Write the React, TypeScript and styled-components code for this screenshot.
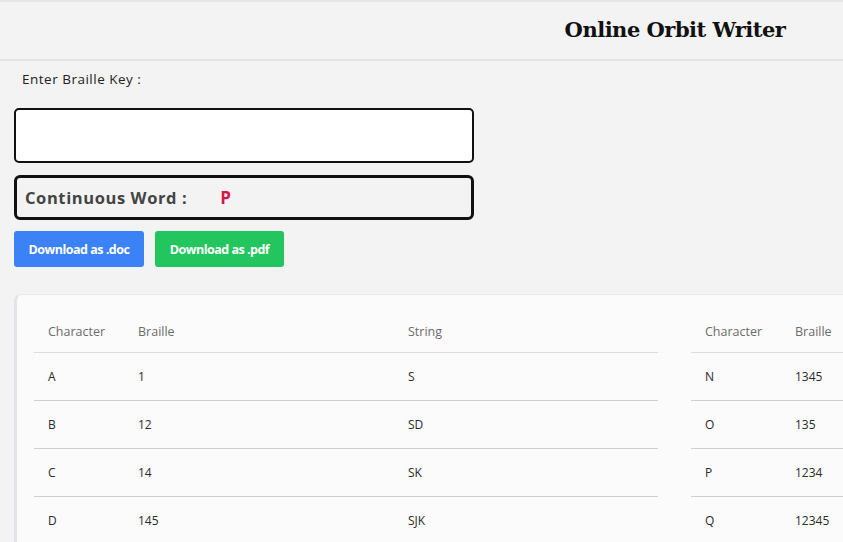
import React from "react";
import styled, { createGlobalStyle } from "styled-components";

const Global = createGlobalStyle`
  html, body { margin: 0; padding: 0; overflow: hidden; }
  body {
    background: #f3f3f3;
    font-family: "Open Sans", "Noto Sans", sans-serif;
    color: #222;
  }
`;

const Page = styled.div`
  width: 1350px;
  min-height: 542px;
`;

const Header = styled.header`
  border-top: 2px solid #e6e6e6;
  border-bottom: 2px solid #e3e3e5;
  height: 57px;
  display: flex;
  align-items: center;
  justify-content: center;
`;

const Title = styled.h1`
  margin: 0 0 2px;
  font-family: "DejaVu Serif", "Liberation Serif", serif;
  font-weight: 700;
  font-size: 21px;
  letter-spacing: -0.5px;
  color: #111;
`;

const Main = styled.main`
  padding: 0 14px;
`;

const Label = styled.div`
  font-size: 13.5px;
  letter-spacing: 0.5px;
  padding: 9px 8px 0;
  height: 29px;
  color: #222;
`;

const KeyInput = styled.div`
  margin-top: 9px;
  width: 460px;
  height: 55px;
  box-sizing: border-box;
  border: 2px solid #111;
  border-radius: 5px;
  background: #fff;
`;

const WordBox = styled.div`
  margin-top: 12px;
  width: 460px;
  height: 45px;
  box-sizing: border-box;
  border: 3px solid #111;
  border-radius: 6px;
  display: flex;
  align-items: center;
  padding-left: 8px;
  gap: 33px;
`;

const WordLabel = styled.span`
  font-size: 16.5px;
  font-weight: 700;
  letter-spacing: 0.6px;
  color: #444;
`;

const WordValue = styled.span`
  font-size: 17px;
  font-weight: 700;
  color: #d1184a;
`;

const Buttons = styled.div`
  display: flex;
  gap: 11px;
  margin-top: 11px;
`;

const Button = styled.button<{ $color: string; $w: number }>`
  width: ${(p) => p.$w}px;
  height: 36px;
  border: none;
  border-radius: 3px;
  background: ${(p) => p.$color};
  color: #fff;
  font-family: "Open Sans", sans-serif;
  font-size: 12.5px;
  font-weight: 700;
  letter-spacing: -0.5px;
  padding: 0;
`;

const Card = styled.section`
  margin: 27px 0 0 0;
  background: #fbfbfb;
  border: 1px solid #e8e8ea;
  border-left: 3px solid #e3e4e8;
  border-radius: 7px;
  padding: 16px 17px;
  display: grid;
  grid-template-columns: 624px 624px;
  column-gap: 33px;
`;

const Table = styled.table`
  border-collapse: collapse;
  width: 624px;
  font-size: 12px;
`;

const Th = styled.th<{ $w?: number }>`
  text-align: left;
  font-weight: 400;
  font-size: 12.5px;
  color: #6b6b6b;
  padding: 12px 14px 12px;
  border-bottom: 1px solid #dcdcdc;
  width: ${(p) => (p.$w ? `${p.$w}px` : "auto")};
`;

const Td = styled.td`
  padding: 15px 14px 15px;
  color: #2a2a2a;
  border-bottom: 1px solid #cfcfcf;
  line-height: 17px;
`;

const left = [
  ["A", "1", "S"],
  ["B", "12", "SD"],
  ["C", "14", "SK"],
  ["D", "145", "SJK"],
];
const right = [
  ["N", "1345", "SJKL"],
  ["O", "135", "SKL"],
  ["P", "1234", "SDKJ"],
  ["Q", "12345", "SDKJL"],
];

function CharTable({ rows }: { rows: string[][] }) {
  return (
    <Table>
      <thead>
        <tr>
          <Th $w={62}>Character</Th>
          <Th $w={242}>Braille</Th>
          <Th>String</Th>
        </tr>
      </thead>
      <tbody>
        {rows.map((r) => (
          <tr key={r[0]}>
            <Td>{r[0]}</Td>
            <Td>{r[1]}</Td>
            <Td>{r[2]}</Td>
          </tr>
        ))}
      </tbody>
    </Table>
  );
}

export default function App() {
  return (
    <Page>
      <Global />
      <Header>
        <Title>Online Orbit Writer</Title>
      </Header>
      <Main>
        <Label>Enter Braille Key :</Label>
        <KeyInput />
        <WordBox>
          <WordLabel>Continuous Word :</WordLabel>
          <WordValue>P</WordValue>
        </WordBox>
        <Buttons>
          <Button $color="#3b82f6" $w={130}>Download as .doc</Button>
          <Button $color="#22c55e" $w={129}>Download as .pdf</Button>
        </Buttons>
        <Card>
          <CharTable rows={left} />
          <CharTable rows={right} />
        </Card>
      </Main>
    </Page>
  );
}
